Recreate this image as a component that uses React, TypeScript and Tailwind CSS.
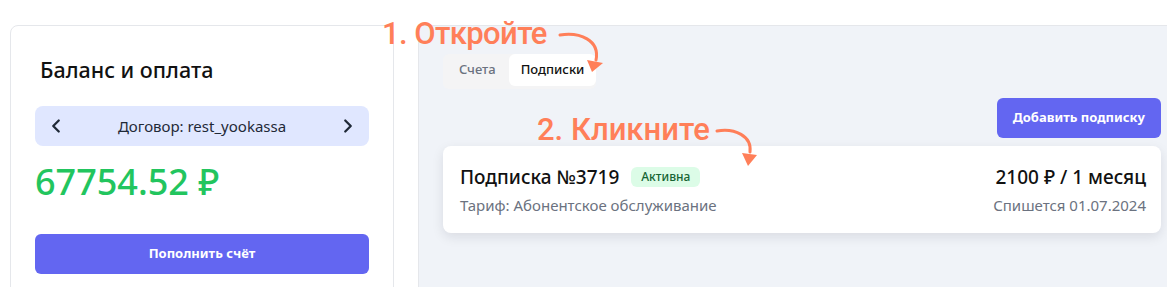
import React from "react";
import { ChevronLeft, ChevronRight } from "lucide-react";

const font = { fontFamily: '"Noto Sans", "Open Sans", sans-serif' };

// curved hint arrows drawn on top of the page
const HintArrows = () => (
  <svg className="pointer-events-none absolute left-0 top-0" width="1167" height="287" viewBox="0 0 1167 287">
    <g stroke="#ff7f59" strokeWidth="3" fill="none" strokeLinecap="round">
      <path d="M560 35 C 580 32, 600 40, 596 60" />
      <path d="M717 131 C 735 128, 752 136, 750 152" />
    </g>
    <g fill="#ff7f59">
      <polygon points="587,60 603,63 592,72" />
      <polygon points="742,153 757,155 748,166" />
    </g>
  </svg>
);

export default function App() {
  return (
    <div className="relative flex h-[287px] w-full overflow-hidden bg-white" style={font}>
      {/* balance column */}
      <div className="w-[418px] shrink-0 pl-[10px] pr-[24px] pt-[25px]">
        <div className="h-[300px] rounded-lg border border-[#e5e7eb] bg-white px-[24px] pt-[30px]">
          <h2 className="ml-[5px] text-[21.5px] font-medium leading-[28px] text-[#111]">Баланс и оплата</h2>
          <div className="mt-[22px] flex h-[40px] items-center justify-between rounded-lg bg-[#e0e7ff] px-[10px] text-[#1f2937]">
            <ChevronLeft size={22} strokeWidth={2.5} />
            <span className="text-[15px]">Договор: rest_yookassa</span>
            <ChevronRight size={22} strokeWidth={2.5} />
          </div>
          <div className="mt-[16px] text-[36px] font-medium leading-[40px] text-[#22c55e]">67754.52 ₽</div>
          <button className="mt-[32px] flex h-[40px] w-full items-center justify-center rounded-md bg-[#6366f1] text-[13px] font-bold text-white">
            Пополнить счёт
          </button>
        </div>
      </div>

      {/* subscriptions panel */}
      <div className="mt-[25px] flex-1 border-l border-t border-[#e5e7eb] bg-[#f0f3f8] pl-[24px] pr-[6px] pt-[28px]">
        <div className="flex w-fit rounded-md bg-[#f4f4f5] pb-[3px]">
          <div className="flex h-[32px] items-center pl-[16px] pr-[13px] text-[13px] font-medium text-[#6b7280]">Счета</div>
          <div className="flex h-[32px] items-center rounded-md bg-white px-[12px] text-[13px] font-medium text-[#111]">Подписки</div>
        </div>
        <div className="mt-[9px] flex justify-end">
          <button className="h-[40px] rounded-md bg-[#6366f1] px-[16px] text-[13px] font-bold text-white">Добавить подписку</button>
        </div>
        <div className="mt-[8px] flex items-start justify-between rounded-lg bg-white pb-[17px] pl-[17px] pr-[15px] pt-[17px] shadow-[0_4px_12px_rgba(15,23,42,0.1)]">
          <div>
            <div className="flex items-center gap-[12px]">
              <span className="text-[19px] font-medium leading-[28px] text-[#111]">Подписка №3719</span>
              <span className="rounded-md bg-[#dcfce7] px-[10px] py-[1px] text-[12px] font-medium text-[#166534]">Активна</span>
            </div>
            <div className="mt-[3px] text-[15px] leading-[22px] text-[#6b7280]">Тариф: Абонентское обслуживание</div>
          </div>
          <div className="text-right">
            <div className="text-[19px] font-medium leading-[28px] text-[#111]">2100 ₽ / 1 месяц</div>
            <div className="mt-[3px] text-[15px] leading-[22px] text-[#6b7280]">Спишется 01.07.2024</div>
          </div>
        </div>
      </div>

      {/* hints */}
      <div className="absolute left-[382px] top-[14px] text-[31px] font-medium leading-[40px] tracking-[-0.6px] text-[#ff7f59]" style={{ fontFamily: "Roboto, sans-serif" }}>
        1. Откройте
      </div>
      <div className="absolute left-[537px] top-[110px] text-[31px] font-medium leading-[40px] text-[#ff7f59]" style={{ fontFamily: "Roboto, sans-serif" }}>
        2. Кликните
      </div>
      <HintArrows />
    </div>
  );
}
